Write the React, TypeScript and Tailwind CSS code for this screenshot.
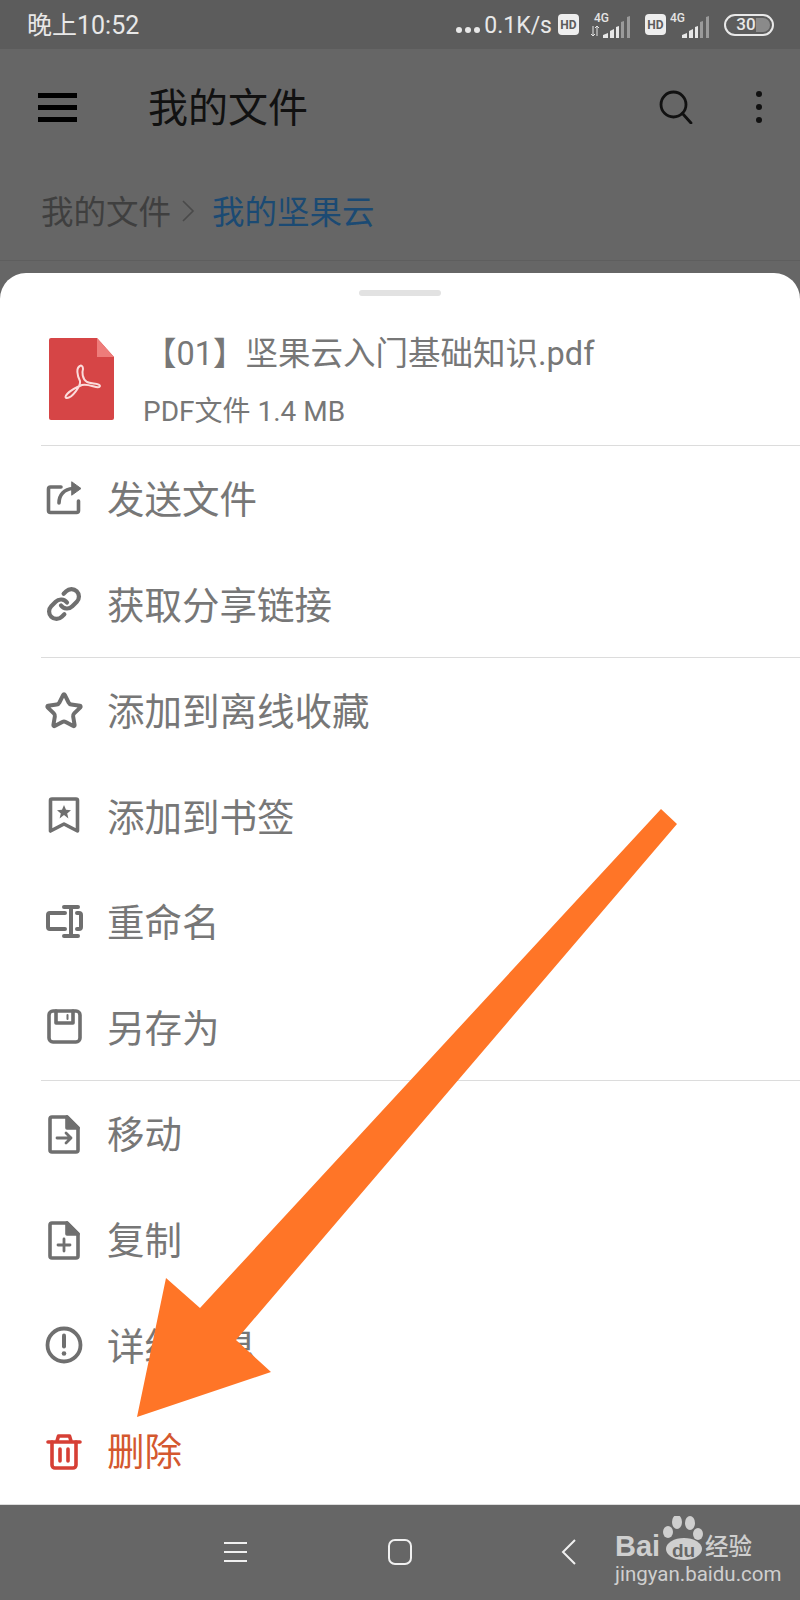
import { Link, Star } from "lucide-react";
import type { ReactNode } from "react";

const CJK = "font-['Roboto','Noto_Sans_CJK_SC',sans-serif]";

function RowIcon({ children, color = "#6f6f6f" }: { children: ReactNode; color?: string }) {
  return (
    <svg width="40" height="40" viewBox="0 0 40 40" fill="none" stroke={color} strokeWidth="3.6" strokeLinecap="round" strokeLinejoin="round">
      {children}
    </svg>
  );
}

const ShareIcon = () => (
  <RowIcon>
    <path d="M17 8H6.500a2 2 0 0 0-2 2v21.500a2 2 0 0 0 2 2h26a2 2 0 0 0 2-2V22" />
    <path d="M15 24c0-8 5-14 14-14.500" />
    <path d="M28 3l9 6.500L28 16z" fill="#6f6f6f" strokeWidth="1" />
  </RowIcon>
);

const BookmarkIcon = () => (
  <RowIcon>
    <path d="M8 3h24a1.500 1.500 0 0 1 1.500 1.500V35L20 28 6.500 35V4.500A1.500 1.500 0 0 1 8 3z" />
    <path d="M20 9l2 4.800 5 .4-3.800 3.300 1.200 5L20 19l-4.400 3.500 1.200-5L13 14.200l5-.4z" fill="#6f6f6f" stroke="none" />
  </RowIcon>
);

const RenameIcon = () => (
  <RowIcon>
    <path d="M21 11H6a2 2 0 0 0-2 2v12a2 2 0 0 0 2 2h15" strokeWidth="4" />
    <path d="M33 11h2a2 2 0 0 1 2 2v12a2 2 0 0 1-2 2h-2" strokeWidth="4" />
    <path d="M27 5v29M20 5h14M20 34h14" strokeWidth="4" />
  </RowIcon>
);

const SaveIcon = () => (
  <RowIcon>
    <rect x="5" y="4" width="31" height="31" rx="4" />
    <path d="M12 4v12h17V4" />
    <path d="M23.500 8v4" strokeWidth="2" />
  </RowIcon>
);

const FileIcon = ({ children }: { children: ReactNode }) => (
  <RowIcon>
    <path d="M6 5a2 2 0 0 1 2-2h15l11 11v22a2 2 0 0 1-2 2H8a2 2 0 0 1-2-2z" />
    <path d="M23 3v11h11z" fill="#6f6f6f" />
    {children}
  </RowIcon>
);

const InfoIcon = () => (
  <RowIcon>
    <circle cx="20" cy="20" r="16.500" strokeWidth="3.800" />
    <path d="M20 10.500v11" strokeWidth="4" />
    <circle cx="20" cy="28.500" r="2.300" fill="#6f6f6f" stroke="none" />
  </RowIcon>
);

const TrashIcon = () => (
  <RowIcon color="#d63f35">
    <path d="M4 11h32M13 10l1.500-5h11l1.500 5" />
    <path d="M8 11v23a3 3 0 0 0 3 3h18a3 3 0 0 0 3-3V11" />
    <path d="M16 18v12M24 18v12" />
  </RowIcon>
);

function Row({ icon, label, danger }: { icon: ReactNode; label: string; danger?: boolean }) {
  return (
    <div className="flex flex-1 items-center">
      <div className="flex w-[46px] justify-center">{icon}</div>
      <span className={`ml-[20px] pt-[4px] text-[37.5px] leading-none ${danger ? "text-[#d4582f]" : "text-[#777777]"}`}>{label}</span>
    </div>
  );
}

function Signal({ arrows }: { arrows?: boolean }) {
  return (
    <svg width="42" height="26" viewBox="0 0 42 26">
      <text x={arrows ? 3 : 0} y="10" fontSize="12" fontFamily="Roboto" fontWeight="500" fill="#e4e4e4">4G</text>
      {arrows && <path d="M2 14v10M0 22l2 2 2-2M6 24V14M4 16l2-2 2 2" stroke="#e4e4e4" strokeWidth="1" fill="none" />}
      <path d="M12 26v-3l5-2v5zM19 26v-7l4-2v9z" fill="#e8e8e8" />
      <path d="M25 26V15l3-1v12z" fill="#e8e8e8" />
      <path d="M30 26V10l3-1v17zM36 26V5l3-1v22z" fill="#9a9a9a" />
    </svg>
  );
}

function Hd() {
  return (
    <span className="flex h-[21px] w-[21px] items-center justify-center rounded-[4px] bg-[#eeeeee] text-[12px] font-bold leading-none text-[#5c5c5c]">
      HD
    </span>
  );
}

function StatusBar() {
  return (
    <div className="flex h-[49px] shrink-0 items-center bg-[#5c5c5c] text-[#e8e8e8]">
      <span className="ml-[27px] pt-[2px] text-[25px] leading-none">晚上10:52</span>
      <div className="ml-auto flex items-center">
        <div className="flex items-center gap-[3px] pt-[10px]">
          <span className="h-[6px] w-[6px] rounded-full bg-[#e8e8e8]" />
          <span className="h-[6px] w-[6px] rounded-full bg-[#e8e8e8]" />
          <span className="h-[6px] w-[6px] rounded-full bg-[#e8e8e8]" />
        </div>
        <span className="ml-[4px] pt-[2px] text-[23px] leading-none">0.1K/s</span>
        <div className="ml-[6px]"><Hd /></div>
        <div className="ml-[12px]"><Signal arrows /></div>
        <div className="ml-[12px]"><Hd /></div>
        <div className="ml-[4px]"><Signal /></div>
        <div className="relative ml-[12px] mr-[26px] flex h-[22px] w-[50px] items-center justify-center rounded-full border-2 border-[#e8e8e8] text-[17px] font-medium leading-none">
          <span className="pr-[6px]">30</span>
          <span className="absolute right-[2px] top-[2px] h-[14px] w-[14px] rounded-r-full bg-[#8a8a8a]" />
        </div>
      </div>
    </div>
  );
}

function AppBar() {
  return (
    <div className="flex h-[116px] shrink-0 items-center">
      <div className="ml-[38px] flex w-[39px] flex-col gap-[7px]">
        <span className="h-[5px] bg-black" />
        <span className="h-[5px] bg-black" />
        <span className="h-[5px] bg-black" />
      </div>
      <span className="ml-[71px] pt-[4px] text-[40px] leading-none text-[#111111]">我的文件</span>
      <svg className="ml-auto" width="34" height="34" viewBox="0 0 34 34" fill="none" stroke="#111111" strokeWidth="2.800" strokeLinecap="round">
        <circle cx="14.500" cy="14.500" r="12.500" />
        <path d="M23.500 23.500L32 33" />
      </svg>
      <div className="ml-[63px] mr-[38px] flex flex-col gap-[7px]">
        <span className="h-[6px] w-[6px] rounded-full bg-[#111111]" />
        <span className="h-[6px] w-[6px] rounded-full bg-[#111111]" />
        <span className="h-[6px] w-[6px] rounded-full bg-[#111111]" />
      </div>
    </div>
  );
}

function Breadcrumb() {
  return (
    <div className="flex h-[96px] shrink-0 items-center border-b border-[#5e5e5e] pb-[3px] pl-[41px]">
      <span className="pt-[4px] text-[32.5px] leading-none text-[#3f3f3f]">我的文件</span>
      <svg className="ml-[10px]" width="14" height="24" viewBox="0 0 14 24" fill="none" stroke="#4a4a4a" strokeWidth="1.600">
        <path d="M2 2l10 10L2 22" />
      </svg>
      <span className="ml-[17px] pt-[4px] text-[32.5px] leading-none text-[#1b4a73]">我的坚果云</span>
    </div>
  );
}

function PdfIcon() {
  return (
    <svg width="65" height="82" viewBox="0 0 65 82">
      <path d="M2 0h46l17 19v61a2 2 0 0 1-2 2H2a2 2 0 0 1-2-2V2a2 2 0 0 1 2-2z" fill="#d64546" />
      <path d="M48 0l17 19H48z" fill="#ee7c7a" />
      <path d="M31 28C27 30 28 37 31 43C32 48 23 60 18 60C14 60 18 53 33 47C40 45 50 52 51 48C51 45 42 46 38 44C33 41 33 34 34 31C34 28 32 27 31 28z" fill="none" stroke="#fbdcdc" strokeWidth="2" />
    </svg>
  );
}

function BottomNav() {
  return (
    <div className="relative flex h-[96px] shrink-0 items-center border-t border-[#dddddd] bg-[#666666] pb-[2px]">
      <div className="ml-[224px] flex w-[23px] flex-col gap-[7px]">
        <span className="h-[2px] bg-[#f0f0f0]" />
        <span className="h-[2px] bg-[#f0f0f0]" />
        <span className="h-[2px] bg-[#f0f0f0]" />
      </div>
      <span className="ml-[141px] h-[26px] w-[24px] rounded-[7px] border-2 border-[#f0f0f0]" />
      <svg className="ml-[149px]" width="16" height="26" viewBox="0 0 16 26" fill="none" stroke="#f0f0f0" strokeWidth="2">
        <path d="M14 1L2 13l12 12" />
      </svg>
      <BaiduMark />
    </div>
  );
}

function BaiduMark() {
  return (
    <div className="absolute left-[615px] top-[11px] h-[76px] w-[142px] text-[#cfcfcf]">
      <span className="absolute left-0 top-[16px] font-['Liberation_Sans',sans-serif] text-[29px] font-bold leading-none">Bai</span>
      <svg className="absolute left-[44px] top-0" width="46" height="48" viewBox="0 0 46 48" fill="#cfcfcf">
        <ellipse cx="18" cy="6" rx="5" ry="7" />
        <ellipse cx="31" cy="7" rx="5" ry="7" />
        <ellipse cx="9" cy="16" rx="5" ry="6" />
        <ellipse cx="39" cy="18" rx="5" ry="6" />
        <ellipse cx="25" cy="33" rx="18" ry="11" />
      </svg>
      <span className="absolute left-[57px] top-[25px] font-['Liberation_Sans',sans-serif] text-[19px] font-bold leading-none text-[#666666]">du</span>
      <span className="absolute left-[90px] top-[20px] text-[23.5px] font-medium leading-none">经验</span>
      <span className="absolute left-0 top-[48px] whitespace-nowrap text-[20.5px] leading-none">jingyan.baidu.com</span>
    </div>
  );
}

export default function App() {
  return (
    <div className={`relative flex h-[1600px] w-[800px] flex-col overflow-hidden bg-[#666666] ${CJK}`}>
      <StatusBar />
      <AppBar />
      <Breadcrumb />
      <div className="mt-[12px] flex flex-1 flex-col rounded-t-[26px] bg-white">
        <div className="flex h-[172px] shrink-0 flex-col">
          <span className="mx-auto mt-[17px] h-[6px] w-[82px] rounded-full bg-[#e2e2e2]" />
          <div className="ml-[49px] mt-[42px] flex">
            <PdfIcon />
            <div className="ml-[29px] flex flex-col">
              <span className="ml-[1px] text-[32.5px] leading-none text-[#777777]">【01】坚果云入门基础知识.pdf</span>
              <span className="mt-[27px] text-[28px] leading-none text-[#777777]">PDF文件 1.4 MB</span>
            </div>
          </div>
        </div>
        <div className="ml-[41px] flex h-[212px] shrink-0 flex-col border-t border-[#dcdcdc]">
          <Row icon={<ShareIcon />} label="发送文件" />
          <Row icon={<Link size={36} color="#6f6f6f" strokeWidth={2.800} />} label="获取分享链接" />
        </div>
        <div className="ml-[41px] flex h-[423px] shrink-0 flex-col border-t border-[#dcdcdc]">
          <Row icon={<Star size={40} color="#6f6f6f" strokeWidth={2.400} />} label="添加到离线收藏" />
          <Row icon={<BookmarkIcon />} label="添加到书签" />
          <Row icon={<RenameIcon />} label="重命名" />
          <Row icon={<SaveIcon />} label="另存为" />
        </div>
        <div className="ml-[41px] flex flex-1 flex-col border-t border-[#dcdcdc]">
          <Row icon={<FileIcon><path d="M13 24h14M22 19l5 5-5 5" strokeWidth="2.800" /></FileIcon>} label="移动" />
          <Row icon={<FileIcon><path d="M20 19v12M14 25h12" strokeWidth="2.800" /></FileIcon>} label="复制" />
          <Row icon={<InfoIcon />} label="详细信息" />
          <Row icon={<TrashIcon />} label="删除" danger />
        </div>
      </div>
      <BottomNav />
      {/* annotation arrow drawn over the screenshot */}
      <svg className="absolute left-0 top-0" width="800" height="1600" viewBox="0 0 800 1600">
        <polygon points="661,809 677,824 236,1340 271,1372 137,1417 166,1278 200,1308" fill="#ff7527" />
      </svg>
    </div>
  );
}
